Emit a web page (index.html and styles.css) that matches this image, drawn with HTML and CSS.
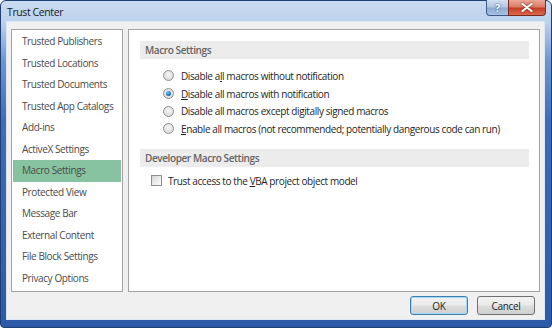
FILE: index.html
```html
<!DOCTYPE html>
<html>
<head>
<meta charset="utf-8">
<title>Trust Center</title>
<link rel="stylesheet" href="styles.css">
</head>
<body>
<div class="window">
  <div class="titlebar">
    <span class="title">Trust Center</span>
    <div class="caption-buttons">
      <div class="cap help">?</div>
      <div class="cap close">
        <svg width="12" height="9" viewBox="0 0 12 9"><path d="M1.5 1 L10.5 8 M10.5 1 L1.5 8" stroke="#ffffff" stroke-width="2.2" stroke-linecap="round"/></svg>
      </div>
    </div>
  </div>
  <div class="client">
    <div class="panes">
      <ul class="nav">
        <li>Trusted Publishers</li>
        <li>Trusted Locations</li>
        <li>Trusted Documents</li>
        <li>Trusted App Catalogs</li>
        <li>Add-ins</li>
        <li>ActiveX Settings</li>
        <li class="selected">Macro Settings</li>
        <li>Protected View</li>
        <li>Message Bar</li>
        <li>External Content</li>
        <li>File Block Settings</li>
        <li>Privacy Options</li>
      </ul>
      <div class="content">
        <div class="section-head">Macro Settings</div>
        <div class="options">
          <div class="opt"><span class="radio"></span><span>Disable a<u>l</u>l macros without notification</span></div>
          <div class="opt"><span class="radio checked"></span><span><u>D</u>isable all macros with notification</span></div>
          <div class="opt"><span class="radio"></span><span>Disable all macros except di<u>g</u>itally signed macros</span></div>
          <div class="opt"><span class="radio"></span><span><u>E</u>nable all macros (not recommended; potentially dangerous code can run)</span></div>
        </div>
        <div class="section-head">Developer Macro Settings</div>
        <div class="check-row"><span class="checkbox"></span><span>Trust access to the <u>V</u>BA project object model</span></div>
      </div>
    </div>
    <div class="footer">
      <button class="btn default">OK</button>
      <button class="btn">Cancel</button>
    </div>
  </div>
</div>
</body>
</html>
```

FILE: styles.css
```css
* { box-sizing: border-box; }
html, body { margin: 0; padding: 0; }
body {
  width: 552px;
  height: 328px;
  background: #ffffff;
  font-family: "Open Sans", "Noto Sans", sans-serif;
  font-size: 10px;
  letter-spacing: -0.4px;
  color: #1e1e1e;
  overflow: hidden;
}
.window {
  width: 552px;
  height: 328px;
  border: 1px solid #1d3f73;
  border-radius: 6px 6px 4px 4px;
  background: linear-gradient(to bottom, #c9dbf0 0px, #bcd1ec 22px, #6d95cf 60px, #3d6cb8 120px, #2c5aa6 100%);
  padding: 0 6px 7px 5px;
  display: flex;
  flex-direction: column;
}
.titlebar {
  height: 20px;
  display: flex;
  justify-content: space-between;
  align-items: flex-start;
}
.title {
  font-size: 10.5px;
  line-height: 22px;
  padding-left: 1px;
  color: #1a1a1a;
}
.caption-buttons {
  display: flex;
  margin-top: -1px;
  margin-right: -1px;
}
.cap {
  height: 16px;
  border: 1px solid #3b5a87;
  border-top: none;
  display: flex;
  align-items: center;
  justify-content: center;
}
.help {
  width: 22px;
  border-radius: 0 0 0 4px;
  background: linear-gradient(to bottom, #d2e0f1 0%, #b3c8e4 45%, #8fabd4 55%, #a8c2e6 100%);
  color: #ffffff;
  font-weight: bold;
  font-size: 11px;
  letter-spacing: 0;
  text-shadow: 0 0 2px #3d5a85, 0 0 1px #3d5a85;
  border-right: none;
}
.close {
  width: 38px;
  border-radius: 0 0 4px 0;
  border-color: #7a2a1e;
  background: linear-gradient(to bottom, #eaa898 0%, #dc7c66 45%, #c53f27 55%, #dc6a4e 100%);
}
.close svg { filter: drop-shadow(0 0 1px #6a1a10); }
.client {
  flex: 1;
  background: #f0f0f0;
  border: 1px solid #dde7f4;
  padding: 7px 4px 0 4px;
  display: flex;
  flex-direction: column;
}
.panes {
  flex: 1;
  display: flex;
  gap: 5px;
  min-height: 0;
}
.nav {
  list-style: none;
  margin: 0;
  padding: 1px;
  width: 112px;
  background: #ffffff;
  border: 1px solid #a3a3a3;
  color: #4a4a4a;
}
.nav li {
  height: 21.5px;
  line-height: 21.5px;
  padding-left: 9px;
  white-space: nowrap;
}
.nav li.selected {
  background: #88c3a1;
}
.content {
  flex: 1;
  background: #ffffff;
  border: 1px solid #a3a3a3;
  padding: 11px 10px 0 11px;
}
.section-head {
  height: 18px;
  line-height: 18px;
  background: #ececec;
  padding-left: 5px;
  font-weight: 600;
  color: #646464;
}
.options {
  margin: 8px 0 11px 0;
}
.opt {
  height: 17.7px;
  display: flex;
  align-items: center;
  padding-left: 23px;
  gap: 7px;
  white-space: nowrap;
}
.radio {
  width: 11px;
  height: 11px;
  border-radius: 50%;
  border: 1px solid #8f9090;
  background: radial-gradient(circle at 50% 40%, #f6f6f6 0%, #e2e2e2 60%, #cfcfcf 100%);
  display: flex;
  align-items: center;
  justify-content: center;
  flex: none;
}
.radio.checked::after {
  content: "";
  width: 5px;
  height: 5px;
  border-radius: 50%;
  background: radial-gradient(circle at 40% 35%, #7ec3f0 0%, #1d6fc0 60%, #0d4a8e 100%);
}
.check-row {
  margin-top: 5px;
  height: 18px;
  display: flex;
  align-items: center;
  padding-left: 11px;
  gap: 6px;
  white-space: nowrap;
}
.checkbox {
  width: 11px;
  height: 11px;
  border: 1px solid #8f9090;
  background: linear-gradient(135deg, #d6d6d6 0%, #efefef 60%, #fbfbfb 100%);
  flex: none;
}
u { text-decoration: underline; text-underline-offset: 1px; }
.footer {
  height: 27px;
  display: flex;
  justify-content: flex-end;
  align-items: flex-start;
  gap: 9px;
  padding: 4px 5px 0 0;
}
.btn {
  width: 58px;
  height: 19px;
  border: 1px solid #707070;
  border-radius: 3px;
  background: linear-gradient(to bottom, #f2f2f2 0%, #ebebeb 48%, #dddddd 52%, #cfcfcf 100%);
  font-family: "Open Sans", "Noto Sans", sans-serif;
  font-size: 10px;
  letter-spacing: -0.3px;
  color: #1e1e1e;
  padding: 0;
}
.btn.default {
  border-color: #3c7fb1;
  box-shadow: inset 0 0 0 1px #9fd8f8;
}
```
